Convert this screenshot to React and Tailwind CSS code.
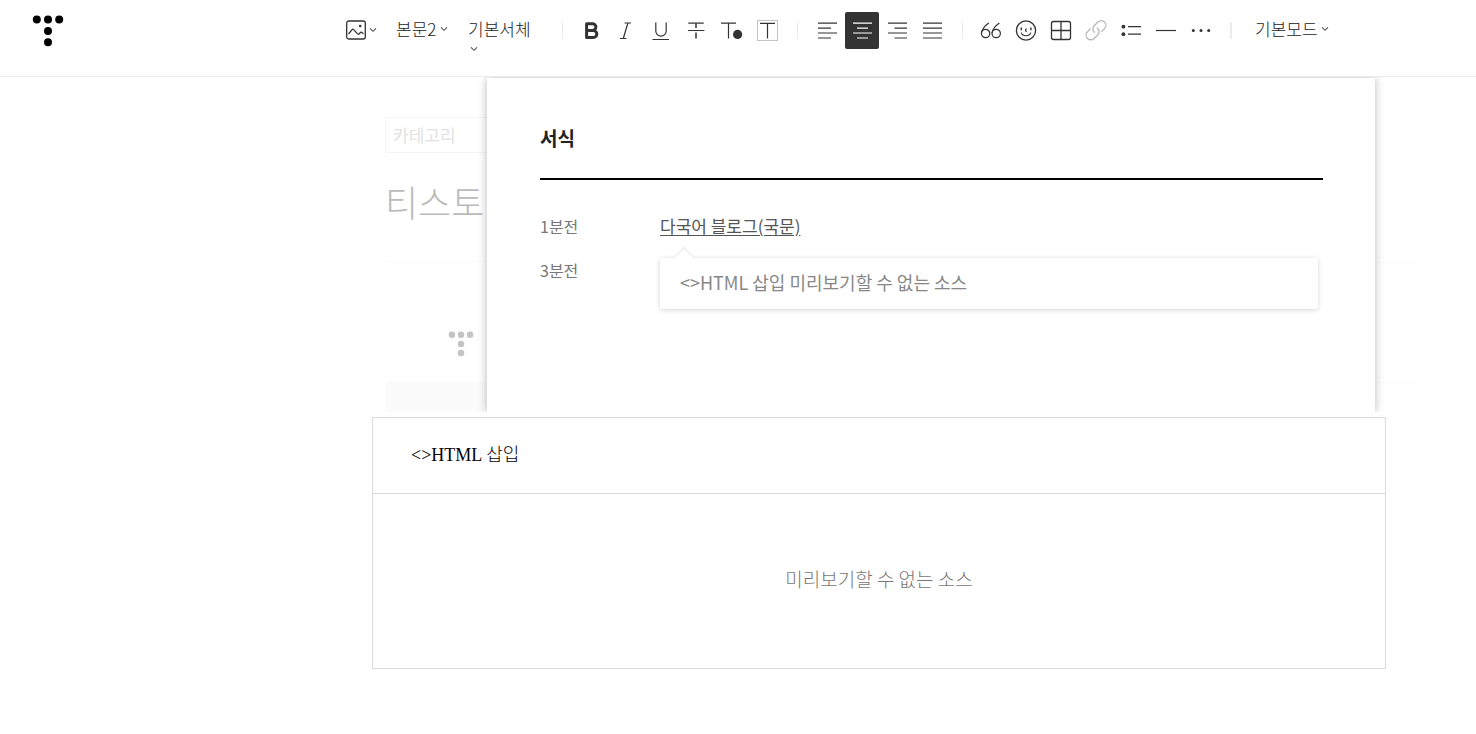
import React, { useState } from 'react';

function Logo({ className }) {
  return (
    <svg viewBox="0 0 32 32" fill="currentColor" className={className} aria-hidden="true">
      <circle cx="4.8" cy="4.6" r="4" />
      <circle cx="16" cy="4.6" r="4" />
      <circle cx="27.2" cy="4.6" r="4" />
      <circle cx="16" cy="15.9" r="4" />
      <circle cx="16" cy="27.2" r="4" />
    </svg>
  );
}

function Chevron() {
  return (
    <svg viewBox="0 0 8 6" className="h-[6px] w-2 shrink-0" fill="none" stroke="#555" strokeWidth="1.1" aria-hidden="true">
      <path d="M1 1.3l3 3 3-3" />
    </svg>
  );
}

const icons = {
  bold: (
    <path strokeWidth="3" strokeLinejoin="round" d="M12.6 11.8h6a3.2 3.2 0 0 1 0 6.6h-6zM12.6 18.4h6.7a3.5 3.5 0 0 1 0 7.1h-6.7z" />
  ),
  italic: <path strokeWidth="1.2" d="M15.5 11h6.5M11 26.5h6.5M18.9 11l-4.6 15.5" />,
  underline: <path strokeWidth="1.2" d="M11.8 10.5v8.5a5.2 5.2 0 0 0 10.4 0v-8.5M8.5 27.5H25" />,
  strike: (
    <>
      <path strokeWidth="1.2" d="M9.3 11.2h15.4M9 18.5h16.4" />
      <path strokeWidth="1.5" d="M17 11.2v4.8M17 20.5v6" />
    </>
  ),
  color: (
    <>
      <path strokeWidth="1.2" d="M7 11.2h15M14.5 11.2v15.3" />
      <circle cx="23.6" cy="22.4" r="4.6" fill="currentColor" stroke="none" />
    </>
  ),
  background: (
    <>
      <rect x="8.5" y="8.5" width="20" height="20" stroke="#c4c4c4" strokeWidth="1" />
      <path strokeWidth="1.2" d="M11 11.3h15M18.5 11.3v15.2" />
    </>
  ),
  left: <path strokeWidth="1.2" d="M8 11.2h19M8 16.2h13M8 21h19M8 26h13" />,
  center: <path strokeWidth="1.2" d="M8 11.2h19M12 16.2h11M8 21h19M12 26h11" />,
  right: <path strokeWidth="1.2" d="M8 11.2h19M14.5 16.2H27M8 21h19M14.5 26H27" />,
  justify: <path strokeWidth="1.2" d="M8 11.2h19M8 16.2h19M8 21h19M8 26h19" />,
  quote: (
    <>
      <path strokeWidth="1.2" d="M14.8 10.9c-4 2.7-6.8 6.1-7.4 10.3M25.4 10.9c-4 2.7-6.8 6.1-7.4 10.3" />
      <circle cx="11.6" cy="21.5" r="4.2" strokeWidth="1.2" />
      <circle cx="22.2" cy="21.5" r="4.2" strokeWidth="1.2" />
    </>
  ),
  emoji: (
    <>
      <circle cx="17" cy="18.5" r="9.6" strokeWidth="1.3" />
      <path strokeWidth="1.4" d="M12.3 15.6v2.6M21.9 15.6v2.6" />
      <path strokeWidth="1.2" d="M17.8 16.8c-1.7.3-1.7 2.6 0 2.8M12.2 20.6c1.4 4.2 8.2 4.2 9.6 0" />
    </>
  ),
  table: <path strokeWidth="1.3" d="M9.5 9.5h15a2 2 0 0 1 2 2v14a2 2 0 0 1-2 2h-15a2 2 0 0 1-2-2v-14a2 2 0 0 1 2-2zM17 9.5v18M7.5 18.5h19" />,
  link: (
    <g stroke="#bbb" strokeWidth="1.4" strokeLinecap="round" transform="translate(5 6.5)">
      <path d="M10.4 13.8a4.6 4.6 0 0 1-.2-6.6l3.6-3.6a4.7 4.7 0 0 1 6.7 6.6l-2.6 2.6" />
      <path d="M13.4 9.6a4.6 4.6 0 0 1 .3 6.8l-3.5 3.5a4.7 4.7 0 0 1-6.7-6.6l2.7-2.7" />
    </g>
  ),
  list: (
    <>
      <circle cx="9.4" cy="14.7" r="1.9" fill="currentColor" stroke="none" />
      <circle cx="9.4" cy="22.2" r="1.9" fill="currentColor" stroke="none" />
      <path strokeWidth="1.3" d="M14 14.7h13M14 22.2h13" />
    </>
  ),
  line: <path strokeWidth="1.2" d="M7 18.5h20" />,
  more: (
    <g fill="currentColor" stroke="none">
      <circle cx="9.3" cy="18.5" r="1.5" />
      <circle cx="17" cy="18.5" r="1.5" />
      <circle cx="24.7" cy="18.5" r="1.5" />
    </g>
  ),
};

const textTools = [
  ['bold', '굵게'],
  ['italic', '기울임'],
  ['underline', '밑줄'],
  ['strike', '취소선'],
  ['color', '글자색'],
  ['background', '글자 배경색'],
];

const alignTools = [
  ['left', '왼쪽 정렬'],
  ['center', '가운데 정렬'],
  ['right', '오른쪽 정렬'],
  ['justify', '양쪽 정렬'],
];

const insertTools = [
  ['quote', '인용구'],
  ['emoji', '이모티콘'],
  ['table', '표'],
  ['link', '링크'],
  ['list', '목록'],
  ['line', '구분선'],
  ['more', '더보기'],
];

function ToolGroup({ tools, active, onSelect }) {
  return (
    <div className="flex shrink-0 gap-px">
      {tools.map(([name, label]) => (
        <button
          key={name}
          type="button"
          aria-label={label}
          onClick={() => onSelect && onSelect(name)}
          className={
            active === name
              ? 'h-[37px] w-[34px] rounded-xs bg-[#333] text-white'
              : 'h-[37px] w-[34px] rounded-xs text-[#333]'
          }
        >
          <svg viewBox="0 0 34 37" className="h-[37px] w-[34px]" fill="none" stroke="currentColor">
            {icons[name]}
          </svg>
        </button>
      ))}
    </div>
  );
}

function Divider() {
  return <span className="mr-3 ml-[14px] mt-[10px] h-[17px] w-px shrink-0 bg-[#ebebeb]" />;
}

function Picker({ label, value, stacked }) {
  return (
    <div className={stacked ? 'flex shrink-0 flex-col' : 'flex shrink-0 items-center gap-[3px]'}>
      <select
        aria-label={label}
        className="h-[34px] appearance-none bg-transparent text-[17px] font-light text-[#222] outline-none"
      >
        <option>{value}</option>
      </select>
      {stacked ? (
        <span className="pl-[2px]">
          <Chevron />
        </span>
      ) : (
        <Chevron />
      )}
    </div>
  );
}

function Toolbar() {
  const [align, setAlign] = useState('center');

  return (
    <div className="flex items-start">
      <button type="button" aria-label="사진 첨부" className="mr-[19px] flex h-9 shrink-0 items-center gap-[3px]">
        <svg viewBox="0 0 20 20" className="size-5" fill="none" stroke="#333" strokeWidth="1.3">
          <rect x="0.7" y="1" width="18.6" height="18" rx="2" />
          <path d="M2.5 14l3.6-4.4c.6-.7 1-.7 1.6 0l3.6 4c.8.8 1.3.9 2.1 0l.7-.8c.8-.9 1.4-.9 2.2 0l1.2 1" />
          <circle cx="14.2" cy="6" r="1.3" fill="#333" stroke="none" />
        </svg>
        <Chevron />
      </button>
      <Picker label="문단 모양" value="본문2" />
      <div className="ml-5 flex w-[94px] shrink-0">
        <Picker label="서체" value="기본서체" stacked />
      </div>
      <span className="mr-[11px] mt-[10px] h-[17px] w-px shrink-0 bg-[#ebebeb]" />
      <ToolGroup tools={textTools} />
      <Divider />
      <ToolGroup tools={alignTools} active={align} onSelect={setAlign} />
      <span className="mr-[11px] ml-[13px] mt-[10px] h-[17px] w-px shrink-0 bg-[#ebebeb]" />
      <ToolGroup tools={insertTools} />
      <span className="ml-3 mr-[23px] mt-[10px] h-[17px] w-[2px] shrink-0 bg-[#ebebeb]" />
      <Picker label="편집 모드" value="기본모드" />
    </div>
  );
}

function TemplatePanel() {
  return (
    <div className="relative min-w-0 flex-1 bg-white pr-[52px] pl-[53px] pt-[46px] shadow-[0_0_9px_rgba(0,0,0,0.28)]">
      <h2 className="border-b-2 border-black pb-[26px] text-[19px] leading-7 font-bold text-[#222]">서식</h2>
      <div className="mt-[34px] flex">
        <span className="w-[120px] shrink-0 text-base leading-6 text-[#777]">1분전</span>
        <a href="#template" className="text-[17px] leading-6 text-[#555] underline underline-offset-2">
          다국어 블로그(국문)
        </a>
      </div>
      <div className="mt-5 flex">
        <span className="w-[120px] shrink-0 text-base leading-6 text-[#777]">3분전</span>
        <div className="relative mr-[5px] flex-1 rounded-xs bg-white px-5 pt-[10px] pb-[13px] text-[18px] leading-7 text-[#888] shadow-[0_1px_5px_rgba(0,0,0,0.17)]">
          <span className="absolute -top-2 left-4 size-4 rotate-45 border-t border-l border-[#e8e8e8] bg-white" />
          &lt;&gt;HTML 삽입 미리보기할 수 없는 소스
        </div>
      </div>
    </div>
  );
}

export default function App() {
  return (
    <div className="bg-white font-['Noto_Sans_CJK_KR',sans-serif]">
      <header className="flex h-[77px] items-start border-b border-[#ebebeb] pt-3">
        <a href="#home" aria-label="티스토리" className="mt-[3px] mr-[282px] ml-8 shrink-0 text-black">
          <Logo className="size-8" />
        </a>
        <Toolbar />
      </header>

      <main>
        <section className="flex h-[335px] overflow-hidden pt-px pl-[385px]">
          <div className="flex w-[102px] shrink-0 flex-col whitespace-nowrap">
            <button
              type="button"
              className="mt-[39px] h-9 rounded-l-xs border border-r-0 border-[#f5f5f5] pl-[7px] text-left text-[17px] text-[#e2e2e2]"
            >
              카테고리
            </button>
            <h1 className="mt-[22px] text-[36px] leading-[52px] font-light text-[#bbb]">티스토</h1>
            <div className="mt-[34px] border-t border-[#fafafa]" />
            <div className="flex h-[119px] items-center justify-end pt-[44px] pr-[13px] text-[#c4c4c4]">
              <Logo className="size-[26px]" />
            </div>
            <div className="flex-1 bg-[#fbfbfb]" />
          </div>
          <TemplatePanel />
          <div className="w-[101px] shrink-0 pt-[184px]">
            <div className="mr-[59px] h-[121px] border-y border-[#fafafa]" />
          </div>
        </section>

        <section className="mt-[5px] mr-[90px] ml-[372px] border border-[#dcdcdc]">
          <div className="border-b border-[#dcdcdc] px-[38px] py-6 font-['Liberation_Serif','Noto_Sans_CJK_KR',serif] text-[18px] leading-[27px] text-black">
            &lt;&gt;HTML <span className="font-light">삽입</span>
          </div>
          <p className="pt-[71px] pb-[75px] text-center text-[19px] leading-7 font-light text-[#777]">
            미리보기할 수 없는 소스
          </p>
        </section>
      </main>
    </div>
  );
}
